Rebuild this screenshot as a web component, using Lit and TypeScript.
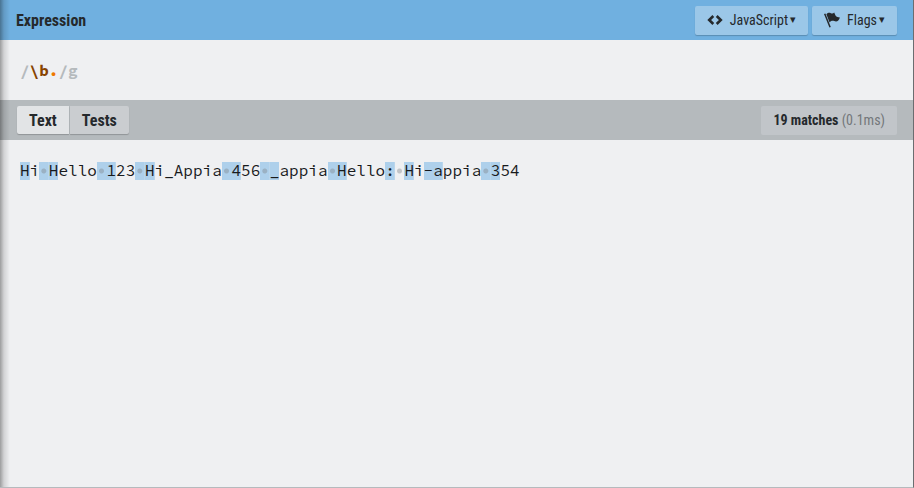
import { LitElement, html, css, svg, TemplateResult } from "lit";
import { customElement, state } from "lit/decorators.js";

const SAMPLE = "Hi Hello 123 Hi_Appia 456 _appia Hello: Hi-appia 354";
const PATTERN = /\b./g;

const codeIcon = svg`<svg class="icon" viewBox="0 0 16 16" width="16" height="16" aria-hidden="true">
  <path d="M6.3 4 L2.2 8 L6.3 12 M9.7 4 L13.8 8 L9.7 12" fill="none" stroke="currentColor" stroke-width="2.6"/>
</svg>`;

const flagIcon = svg`<svg class="icon" viewBox="0 0 16 16" width="16" height="16" aria-hidden="true">
  <path d="M0 2 L1.4 1.4 L6.8 15 L5.4 15.6 Z" fill="currentColor"/>
  <path d="M2.4 2.2 C4 0.6 5.4 0.6 6.8 1.2 C8.2 1.8 9.2 1.6 10.2 0.6 L11.5 3.6 C12.6 5 14 5.5 15.9 5.6 C15 8.2 13.8 9.6 12 9.6 C9.8 9.4 8.4 7.6 5.6 10.4 Z" fill="currentColor"/>
</svg>`;

@customElement("app-root")
export class AppRoot extends LitElement {
  @state() private tab = "Text";

  static styles = css`
    :host {
      display: flex;
      flex-direction: column;
      position: relative;
      box-sizing: border-box;
      min-height: 100vh;
      border-right: 1px solid #6b6d70;
      border-bottom: 1px solid #b5babd;
      background: #eff0f2;
      color: #25292c;
      font: 16px/20px "Roboto Condensed", Roboto, sans-serif;
    }
    .edge {
      position: absolute;
      inset: 0 auto 0 0;
      width: 10px;
      background: linear-gradient(to right, rgba(0, 0, 0, 0.35), rgba(0, 0, 0, 0.12) 40%, transparent);
      pointer-events: none;
    }
    .bar {
      display: flex;
      align-items: center;
      justify-content: space-between;
      height: 40px;
      padding: 0 16px;
    }
    .header {
      background: #70b0e0;
    }
    .tools {
      background: #b5babd;
    }
    .title {
      margin: 0;
      padding-top: 2px;
      font-size: 16px;
      font-weight: 700;
    }
    .actions {
      display: flex;
      gap: 4px;
    }
    button {
      border: 0;
      margin: 0;
      height: 28px;
      padding: 0 12px;
      font: inherit;
      color: inherit;
      box-shadow: 0 1px 1px rgba(0, 0, 0, 0.2);
    }
    .action {
      display: flex;
      align-items: center;
      height: 29px;
      border-radius: 2px;
      background: #9bc7e8;
      font-size: 14px;
    }
    .icon {
      margin-right: 7px;
    }
    .caret {
      margin-left: 2px;
      font-size: 11px;
    }
    .tabs {
      display: flex;
      gap: 1px;
      padding-left: 1px;
    }
    .tab {
      padding-top: 2px;
      background: #cacdd0;
      font-weight: 700;
    }
    .tab:first-child {
      border-radius: 2px 0 0 2px;
    }
    .tab:last-child {
      border-radius: 0 2px 2px 0;
    }
    .selected {
      background: #e2e4e6;
    }
    .result {
      height: 29px;
      padding: 0 12px;
      border-radius: 2px;
      background: #c1c5c9;
      font-size: 14px;
      line-height: 29px;
    }
    .time {
      color: #73777a;
    }
    .code {
      padding: 20px;
      font: 16px/20px "Source Code Pro", "Liberation Mono", monospace;
      white-space: pre-wrap;
    }
    .expression {
      font-weight: 700;
      color: #b5babd;
    }
    .escape {
      color: #884400;
    }
    .dot {
      color: #ee7700;
    }
    .text {
      flex: 1;
      color: #181a1c;
    }
    .match,
    .space {
      --fill: transparent;
      --mark: transparent;
      background-image: radial-gradient(circle at center, var(--mark) 2px, transparent 3px),
        linear-gradient(var(--fill), var(--fill));
      background-size: 100% 18px;
      background-position: bottom;
      background-repeat: no-repeat;
    }
    .match {
      --fill: #aed0eb;
    }
    .space {
      --mark: rgba(125, 130, 135, 0.4);
    }
  `;

  private renderSample(): TemplateResult[] {
    const hits = new Set([...SAMPLE.matchAll(PATTERN)].map((m) => m.index));
    return [...SAMPLE].map((ch, i) => {
      const names = [hits.has(i) ? "match" : "", ch === " " ? "space" : ""].join(" ").trim();
      return names ? html`<span class=${names}>${ch}</span>` : html`${ch}`;
    });
  }

  render() {
    const count = [...SAMPLE.matchAll(PATTERN)].length;
    return html`
      <header class="bar header">
        <h1 class="title">Expression</h1>
        <div class="actions">
          <button class="action">${codeIcon}JavaScript<span class="caret">▾</span></button>
          <button class="action">${flagIcon}Flags<span class="caret">▾</span></button>
        </div>
      </header>
      <div class="code expression">/<span class="escape">\\b</span><span class="dot">.</span>/g</div>
      <div class="bar tools">
        <div class="tabs" role="tablist">
          ${["Text", "Tests"].map(
            (name) => html`<button
              class="tab ${name === this.tab ? "selected" : ""}"
              role="tab"
              aria-selected=${name === this.tab ? "true" : "false"}
              @click=${() => (this.tab = name)}
            >${name}</button>`
          )}
        </div>
        <div class="result"><b>${count} matches</b> <span class="time">(0.1ms)</span></div>
      </div>
      <div class="code text">${this.renderSample()}</div>
      <div class="edge"></div>
    `;
  }
}
